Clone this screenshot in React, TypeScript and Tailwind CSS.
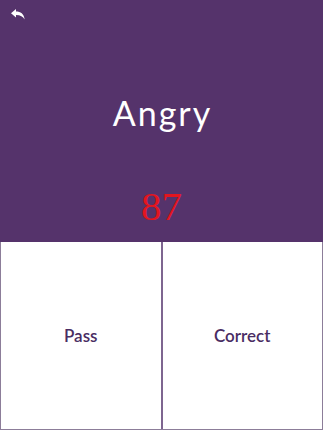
import React from 'react';

const BackIcon: React.FC = () => (
    <svg width="14" height="11" viewBox="0 0 14 11" fill="white">
        <path d="M0 4.2 L5 0 L5 2.6 C9.5 2.6 13 4.8 13.6 10.6 C12 7.6 9.5 6 5 6 L5 8.6 Z" />
    </svg>
);

const App: React.FC = () => {
    return (
        <div className="w-[323px] h-[430px] flex flex-col bg-white overflow-hidden">
            <div className="h-[242px] bg-[#55336b] flex flex-col items-center relative">
                <button className="absolute left-[11px] top-[9px]">
                    <BackIcon />
                </button>
                <div className="mt-[94px] pl-[2px] text-white text-[34px] leading-[38px] tracking-[2px] font-['Lato',sans-serif]">
                    Angry
                </div>
                <div className="mt-[52px] text-[#e3151f] text-[41px] leading-[44px] font-['Liberation_Serif',serif]">
                    87
                </div>
            </div>
            <div className="flex-1 flex border-l border-r border-b border-[#8c7d99]">
                <button className="flex-1 flex items-center justify-center text-[#4a2d63] text-[17px] font-semibold font-['Lato',sans-serif] border-r-2 border-[#7e6590]">
                    Pass
                </button>
                <button className="flex-1 flex items-center justify-center text-[#4a2d63] text-[17px] font-semibold font-['Lato',sans-serif]">
                    Correct
                </button>
            </div>
        </div>
    );
};

export default App;
